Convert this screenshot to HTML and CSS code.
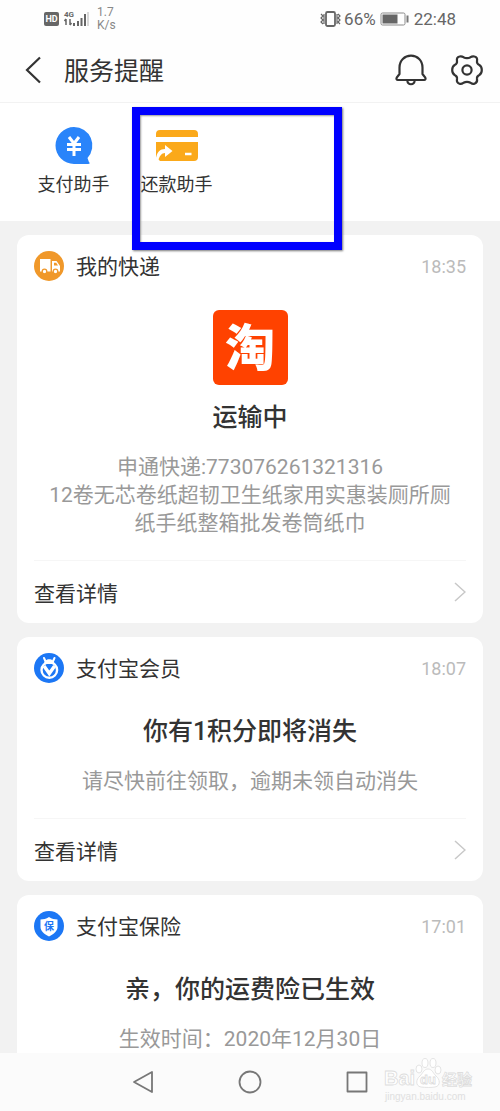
FILE: index.html
```html
<!DOCTYPE html>
<html lang="zh-CN">
<head>
<meta charset="utf-8">
<meta name="viewport" content="width=device-width, initial-scale=1">
<title>服务提醒</title>
<link rel="stylesheet" href="styles.css">
</head>
<body>
<div class="screen">
  <div class="status">
    <div class="status-side">
      <svg width="45" height="20" viewBox="0 0 45 20" aria-hidden="true">
        <rect x="0" y="3" width="15" height="14" rx="2" fill="#666"/>
        <text class="hd" x="7.5" y="13" text-anchor="middle">HD</text>
        <text class="net" x="20" y="8">4G</text>
        <path d="M22 10v6M20.500 12l1.500-2M26 10v6M26 16l1.500-2" stroke="#666" stroke-width="1.500" fill="none"/>
        <path d="M30 14v3M34 12v5M37.500 9v8M41 5v12" stroke="#666" stroke-width="2"/>
        <path d="M44 3v14" stroke="#ccc" stroke-width="1.500"/>
      </svg>
      <span class="speed">1.7<br>K/s</span>
    </div>
    <div class="status-side">
      <svg width="21" height="18" viewBox="0 0 21 18" aria-hidden="true" fill="none" stroke="#666">
        <rect x="6" y="2" width="9" height="14" rx="1.500" stroke-width="1.800"/>
        <path d="M1 4l2 2-2 2 2 2-2 2 2 2M4 4v10M18 4l2 2-2 2 2 2-2 2 2 2M17 4v10" stroke-width="1.200"/>
      </svg>
      <span class="percent">66%</span>
      <svg class="battery" width="29" height="14" viewBox="0 0 29 14" aria-hidden="true">
        <rect x="1" y="1" width="24" height="12" rx="1.500" fill="none" stroke="#8a8a8a"/>
        <rect x="2.500" y="2.500" width="15" height="9" fill="#666"/>
        <rect x="26.500" y="3.500" width="2" height="7" fill="#777"/>
      </svg>
      <span>22:48</span>
    </div>
  </div>

  <header class="header">
    <button class="icon-btn" type="button" aria-label="返回">
      <svg width="18" height="28" viewBox="0 0 18 28" fill="none" stroke="#333" stroke-width="2.200"><path d="M16 1.500 3 14l13 12.500"/></svg>
    </button>
    <h1 class="title">服务提醒</h1>
    <button class="icon-btn bell" type="button" aria-label="通知">
      <svg width="32" height="32" viewBox="0 0 32 32" fill="none" stroke="#333" stroke-width="2.200" stroke-linejoin="round"><path d="M4.500 20V13.500C4.500 6.500 9.500 1.700 16 1.700S27.500 6.500 27.500 13.500V20l2.800 3.700c.6 1.200.1 2.300-1.200 2.300H2.900c-1.300 0-1.800-1.100-1.200-2.300z"/><path d="M12.300 26.500c.5 5 6.900 5 7.400 0"/></svg>
    </button>
    <button class="icon-btn" type="button" aria-label="设置">
      <svg width="32" height="32" viewBox="0 0 32 32" fill="none" stroke="#333" stroke-width="2.200" stroke-linejoin="round"><path d="M8.500 2.500C6.500 3 5.500 4.500 6 7c.3 2-.6 3.200-2.300 4C2 12 1.200 13.500 1.200 16s.8 4 2.500 5c1.700.8 2.600 2 2.300 4-.5 2.500.5 4 2.500 4.700 2 .6 3-.2 4-.9 2.300-1.300 4.700-1.300 7 0 1 .7 2 1.500 4 .9 2-.7 3-2.200 2.500-4.700-.3-2 .6-3.200 2.300-4 1.700-1 2.500-2.500 2.500-5s-.8-4-2.500-5c-1.700-.8-2.600-2-2.300-4 .5-2.500-.5-4-2.500-4.500-2-.6-3 0-4 .7-2.300 1.300-4.700 1.300-7 0-1-.7-2-1.300-4-.7z"/><circle cx="16" cy="16" r="4.600"/></svg>
    </button>
  </header>

  <nav class="shortcuts" aria-label="助手">
    <a class="shortcut" href="#pay">
      <svg width="44" height="38" viewBox="0 0 44 38" aria-hidden="true"><path d="M22 0a18.500 18.500 0 1 0 0 37h14c2 0 2.300-1 1-1.700L35.500 31A18.500 18.500 0 0 0 22 0z" fill="#2984fa"/><path d="M17 10l5 6.500 5-6.500M15 17.500h14M15 22.500h14M22 16v13" fill="none" stroke="#fff" stroke-width="3"/></svg>
      <span>支付助手</span>
    </a>
    <a class="shortcut" href="#repay">
      <svg width="44" height="38" viewBox="0 0 44 38" aria-hidden="true"><path d="M1 10V7q0-4 4-4h34q4 0 4 4v3zM1 15h42v15q0 4-4 4H5l-4-4z" fill="#fba91a"/><path d="M1 31c1-6 4-9 9-9v-4l7.500 6-7.500 6v-4C6.500 26 4.500 29 3 34L1 34z" fill="#fff"/><path d="M30 27h6.500" stroke="#fff" stroke-width="2.500"/></svg>
      <span>还款助手</span>
    </a>
    <div class="highlight" aria-hidden="true"></div>
  </nav>

  <main class="feed">
    <article class="card">
      <div class="card-head">
        <svg width="30" height="30" viewBox="0 0 30 30" aria-hidden="true"><circle cx="15" cy="15" r="15" fill="#f0982a"/><path d="M6 8h10.500v12.500H6zM18 10h4.500l3.500 5v5.500h-8z" fill="#fff"/><path d="M20 11.800h2.200l1.800 2.800h-4z" fill="#f0982a"/><circle cx="10.500" cy="20.500" r="2.300" fill="#fff" stroke="#f0982a" stroke-width="1.300"/><circle cx="21.500" cy="20.500" r="2.300" fill="#fff" stroke="#f0982a" stroke-width="1.300"/></svg>
        <h2 class="card-name">我的快递</h2>
        <time class="card-time">18:35</time>
      </div>
      <div class="shop-logo">淘</div>
      <h3 class="headline">运输中</h3>
      <p class="detail">申通快递:773076261321316<br>12卷无芯卷纸超韧卫生纸家用实惠装厕所厕<br>纸手纸整箱批发卷筒纸巾</p>
      <a class="more" href="#delivery"><span>查看详情</span><svg width="12" height="20" viewBox="0 0 12 20" fill="none" stroke="#c8c8c8" stroke-width="1.500"><path d="M1 1l10 9-10 9"/></svg></a>
    </article>

    <article class="card">
      <div class="card-head">
        <svg width="30" height="30" viewBox="0 0 30 30" aria-hidden="true"><circle cx="15" cy="15" r="15" fill="#1c77f5"/><path d="M10 5l1.800 4M20.500 5l-1.800 4" stroke="#fff" stroke-width="2" stroke-linecap="round"/><path d="M10 11c0-6.500 10.500-6.500 10.500 0z" fill="#fff"/><circle cx="15.300" cy="17" r="7.800" fill="none" stroke="#fff" stroke-width="2.400"/><path d="M10 13l5.300 7.500 5.300-7.500" fill="none" stroke="#fff" stroke-width="3.400"/></svg>
        <h2 class="card-name">支付宝会员</h2>
        <time class="card-time">18:07</time>
      </div>
      <h3 class="headline">你有1积分即将消失</h3>
      <p class="detail">请尽快前往领取，逾期未领自动消失</p>
      <a class="more" href="#points"><span>查看详情</span><svg width="12" height="20" viewBox="0 0 12 20" fill="none" stroke="#c8c8c8" stroke-width="1.500"><path d="M1 1l10 9-10 9"/></svg></a>
    </article>

    <article class="card">
      <div class="card-head">
        <svg width="30" height="30" viewBox="0 0 30 30" aria-hidden="true"><circle cx="15" cy="15" r="15" fill="#1c77f5"/><path d="M15 6c3 2 5.500 2.400 8.500 2.500V16c0 4-3.500 7-8.500 9.500C10 23 6.500 20 6.500 16V8.500C9.500 8.400 12 8 15 6z" fill="#fff"/><text class="shield" x="15" y="19" text-anchor="middle">保</text></svg>
        <h2 class="card-name">支付宝保险</h2>
        <time class="card-time">17:01</time>
      </div>
      <h3 class="headline">亲，你的运费险已生效</h3>
      <p class="detail">生效时间：2020年12月30日</p>
    </article>
  </main>

  <footer class="sysnav">
    <button class="icon-btn" type="button" aria-label="后退"><svg width="22" height="24" viewBox="0 0 22 24" fill="none" stroke="#777" stroke-width="1.800" stroke-linejoin="round"><path d="M20 2v20L2 12z"/></svg></button>
    <button class="icon-btn" type="button" aria-label="主页"><svg width="24" height="24" viewBox="0 0 24 24" fill="none" stroke="#777" stroke-width="1.800"><circle cx="12" cy="12" r="10.500"/></svg></button>
    <button class="icon-btn" type="button" aria-label="最近任务"><svg width="22" height="24" viewBox="0 0 22 24" fill="none" stroke="#777" stroke-width="1.800" stroke-linejoin="round"><rect x="1.500" y="2.500" width="19" height="19"/></svg></button>
    <div class="watermark">
      <svg width="90" height="48" viewBox="0 0 90 48" role="img" aria-label="Baidu经验">
        <g fill="#fff" stroke="#ddd" stroke-width=".8">
          <text class="wm-latin" x="0" y="28">Bai</text>
          <text class="wm-cjk" x="58" y="28">经验</text>
          <ellipse cx="35" cy="12" rx="3" ry="4"/><ellipse cx="41" cy="6" rx="3" ry="4.500"/><ellipse cx="49" cy="6" rx="3" ry="4.500"/><ellipse cx="54" cy="13" rx="3" ry="4"/>
          <path d="M44 12c4 0 5 4 8 7 4 3 5 10-1 11-3 .6-10 .6-14 0-6-1-5-8-1-11 3-3 4-7 8-7z"/>
          <text class="wm-du" x="44" y="27" text-anchor="middle">du</text>
        </g>
        <text class="wm-url" x="1" y="43">jingyan.baidu.com</text>
      </svg>
    </div>
  </footer>
</div>
</body>
</html>
```
FILE: styles.css
```css
* { box-sizing: border-box; }
body, h1, h2, h3, p { margin: 0; }
body {
  font-family: Roboto, "Noto Sans CJK SC", sans-serif;
  color: #333;
  background: #f2f2f2;
}
svg { display: block; flex: none; }
a { color: inherit; text-decoration: none; }

.screen {
  display: flex;
  flex-direction: column;
  height: 100vh;
  overflow: hidden;
}

.status {
  display: flex;
  justify-content: space-between;
  height: 38px;
  padding: 0 44px;
  background: #fefefe;
  color: #666;
  font-size: 17px;
}
.status-side { display: flex; align-items: center; }
.speed { margin-left: 8px; font-size: 12px; line-height: 13px; color: #888; }
.percent { margin-left: 3px; }
.battery { margin: 0 5px 0 4px; }
.hd { font: bold 9px Roboto, sans-serif; fill: #fff; }
.net { font: bold 8px Roboto, sans-serif; fill: #666; }

.header {
  display: flex;
  align-items: center;
  height: 65px;
  padding: 0 17px 0 24px;
  background: #fefefe;
  border-bottom: 1px solid #f2f2f2;
}
.title { flex: 1; margin-left: 22px; padding-top: 4px; font-size: 25px; font-weight: 400; line-height: 36px; }
.bell { margin-right: 24px; }
.icon-btn { padding: 0; border: 0; background: none; }

.shortcuts {
  position: relative;
  display: flex;
  flex: none;
  height: 118px;
  padding: 24px 22px 0;
  background: #fff;
}
.shortcut {
  display: flex;
  flex-direction: column;
  align-items: center;
  gap: 7px;
  width: 103px;
  font-size: 18px;
  line-height: 26px;
}
/* Marker frame floating over the second shortcut and the first card */
.highlight {
  position: absolute;
  top: 4px;
  left: 132px;
  width: 210px;
  height: 143px;
  border: 8px solid #00f;
  box-shadow: 1px 1px 2px #777, inset 1px 1px 2px #999;
}

.feed {
  display: flex;
  flex-direction: column;
  flex: 1;
  gap: 14px;
  min-height: 0;
  padding: 14px 17px 0;
  overflow: hidden;
}
.card { flex: none; padding: 0 17px; border-radius: 12px; background: #fff; }
.card-head { display: flex; align-items: center; height: 62px; }
.card-name { flex: 1; margin-left: 12px; padding-top: 2px; font-size: 21px; font-weight: 400; line-height: 30px; }
.card-time { font-size: 18px; color: #bbb; }
.shop-logo {
  width: 75px;
  margin: 13px auto 0;
  padding-top: 4px;
  border-radius: 6px;
  background: #ff4200;
  color: #fff;
  font-size: 50px;
  font-weight: 900;
  line-height: 71px;
  text-align: center;
}
.headline { margin-top: 15px; font-size: 25px; font-weight: 500; line-height: 36px; text-align: center; }
.detail {
  margin: 17px -8px 23px;
  font-size: 21px;
  line-height: 28px;
  color: #999;
  text-align: center;
}
.more {
  display: flex;
  align-items: center;
  justify-content: space-between;
  height: 63px;
  border-top: 1px solid #f6f6f6;
  font-size: 21px;
}
.shield { font: bold 10px "Noto Sans CJK SC", sans-serif; fill: #1c77f5; }

.sysnav {
  position: relative;
  display: flex;
  flex: none;
  align-items: center;
  justify-content: center;
  gap: 84px;
  height: 58px;
  background: #fbfbfb;
}
.watermark { position: absolute; top: 4px; right: 26px; }
.wm-latin { font: bold 20px "Liberation Sans", sans-serif; }
.wm-cjk { font: bold 15px "Noto Sans CJK SC", sans-serif; }
.wm-du { font: bold 13px "Liberation Sans", sans-serif; }
.wm-url { font: 10px "Liberation Sans", sans-serif; fill: #e0e0e0; }
```
